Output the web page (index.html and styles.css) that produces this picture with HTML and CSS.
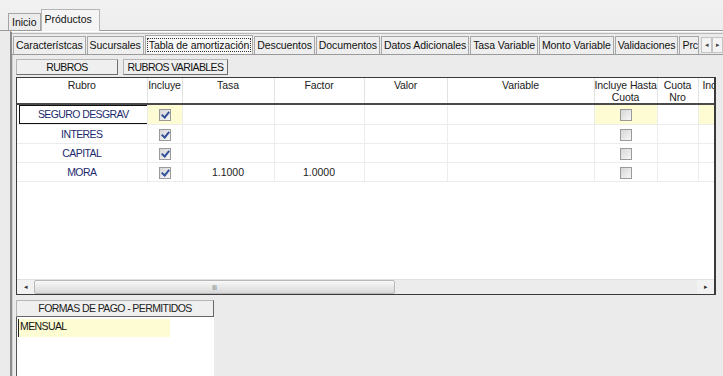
FILE: index.html
```html
<!DOCTYPE html>
<html lang="es">
<head>
  <meta charset="UTF-8" />
  <title>Productos</title>
  <link rel="stylesheet" href="styles.css">
</head>
<body>
  <div class="top-tabs">
    <div class="tab">Inicio</div>
    <div class="tab active">Próductos</div>
  </div>

  <div class="outer">
    <div class="sub-tabs">
      <div class="stab">Característcas</div>
      <div class="stab">Sucursales</div>
      <div class="stab active"><span class="focus">Tabla de amortización</span></div>
      <div class="stab">Descuentos</div>
      <div class="stab">Documentos</div>
      <div class="stab">Datos Adicionales</div>
      <div class="stab">Tasa Variable</div>
      <div class="stab">Monto Variable</div>
      <div class="stab">Validaciones</div>
      <div class="stab cut">Prc</div>
      <div class="arrows">
        <span class="arr">&#9666;</span>
        <span class="arr">&#9656;</span>
      </div>
    </div>

    <div class="inner">
      <div class="btn-row">
        <div class="btn b1">RUBROS</div>
        <div class="btn b2">RUBROS VARIABLES</div>
      </div>

      <div class="grid">
        <table>
          <colgroup>
            <col style="width:130px"><col style="width:35px"><col style="width:92px">
            <col style="width:90px"><col style="width:83px"><col style="width:147px">
            <col style="width:63px"><col style="width:41px"><col style="width:17px">
          </colgroup>
          <thead>
            <tr>
              <th>Rubro</th><th>Incluye</th><th>Tasa</th><th>Factor</th><th>Valor</th>
              <th>Variable</th><th>Incluye Hasta<br>Cuota</th><th>Cuota<br>Nro</th><th class="clip">Inc</th>
            </tr>
          </thead>
          <tbody>
            <tr>
              <td class="name sel"><span>SEGURO DESGRAV</span></td>
              <td class="yel"><span class="cb on"></span></td>
              <td></td><td></td><td></td><td></td>
              <td class="yel"><span class="cb"></span></td>
              <td></td><td class="yel"></td>
            </tr>
            <tr>
              <td class="name">INTERES</td>
              <td><span class="cb on"></span></td>
              <td></td><td></td><td></td><td></td>
              <td><span class="cb"></span></td>
              <td></td><td></td>
            </tr>
            <tr>
              <td class="name">CAPITAL</td>
              <td><span class="cb on"></span></td>
              <td></td><td></td><td></td><td></td>
              <td><span class="cb"></span></td>
              <td></td><td></td>
            </tr>
            <tr>
              <td class="name">MORA</td>
              <td><span class="cb on"></span></td>
              <td>1.1000</td><td>1.0000</td><td></td><td></td>
              <td><span class="cb"></span></td>
              <td></td><td></td>
            </tr>
          </tbody>
        </table>
        <div class="hscroll">
          <span class="sarr">&#9666;</span>
          <div class="thumb">|||</div>
          <div class="track"></div>
          <span class="sarr">&#9656;</span>
        </div>
      </div>

      <div class="formas">
        <div class="formas-left">
          <div class="formas-head">FORMAS DE PAGO - PERMITIDOS</div>
          <div class="list">
            <div class="list-item">MENSUAL</div>
          </div>
        </div>
      </div>
    </div>
  </div>
</body>
</html>
```

FILE: styles.css
```css
body { margin: 0; background: #ebebeb; font-family: "Liberation Sans", Arial, sans-serif; font-size: 10.5px; color: #111; height: 376px; overflow: hidden; }
.btn, td.name, .formas-head, .list-item { font-size: 10.5px; letter-spacing: -0.6px; }

.top-tabs { display: flex; align-items: flex-end; height: 30px; padding-left: 8px; background: linear-gradient(#f1f1f1, #eeeeee); border-bottom: 1px solid #9a9a9a; }
.tab { height: 16px; line-height: 16px; padding: 0 3px; border: 1px solid #a5a5a5; border-bottom: none; background: #ececec; }
.tab.active { height: 21px; line-height: 18px; padding: 0 7px 0 3px; background: #f5f5f5; margin-bottom: -1px; border-color: #b5b5b5; }

.outer { margin-left: 10px; border-left: 2px solid #8c8c8c; border-top: 1px solid #ffffff; height: 345px; }
.sub-tabs { display: flex; align-items: flex-end; height: 20px; padding-left: 1px; margin-top: 1px; border-bottom: 1px solid #9a9a9a; border-top: 1px solid #b8b8b8; overflow: hidden; }
.stab { height: 17px; line-height: 17px; padding: 0 2px; border: 1px solid #a8a8a8; border-bottom: none; background: #eeeeee; margin-right: 1px; white-space: nowrap; flex-shrink: 0; letter-spacing: -0.08px; }
.stab.active { height: 19px; line-height: 18px; background: #f7f7f7; margin-bottom: -1px; padding: 0 1px; }
.focus { border: 1px dotted #333; padding: 0 1px; }
.stab.cut { width: 16px; overflow: hidden; padding-right: 0; }
.arrows { display: flex; margin-left: 1px; margin-bottom: 1px; flex-shrink: 0; }
.arr { width: 9px; height: 14px; line-height: 14px; font-size: 7px; text-align: center; border: 1px solid #c4c4c4; background: #f3f3f3; color: #444; }

.inner { padding-left: 3px; border-left: 1px solid #d0d0d0; height: 322px; }
.btn-row { display: flex; gap: 5px; padding-top: 4px; }
.btn { height: 14px; line-height: 14px; border: 1px solid #b5b5b5; border-right-color: #6e6e6e; border-bottom-color: #6e6e6e; background: #efefef; text-align: center; white-space: nowrap; }
.btn.b1 { width: 100px; }
.btn.b2 { width: 103px; }

.grid { width: 697px; height: 216px; margin-top: 2px; border: 1px solid #3a3a3a; border-width: 1px 2px 1px 1px; background: #fff; position: relative; overflow: hidden; }
table { border-collapse: collapse; table-layout: fixed; width: 698px; }
th { height: 23px; font-weight: normal; vertical-align: top; line-height: 12px; padding: 1px 0 0; text-align: center; border-right: 1px solid #e2e2e2; border-bottom: 2px solid #4a4a4a; color: #222; white-space: nowrap; letter-spacing: -0.1px; }
th.clip { text-align: left; overflow: hidden; padding-left: 4px; }
td { height: 18px; padding: 0; text-align: center; border-right: 1px solid #ececec; border-bottom: 1px solid #ececec; color: #222; }
td.name { color: #1c2a6e; }
td.sel { padding: 0 0 0 2px; }
td.sel span { display: block; height: 17px; line-height: 17px; border: 1px solid #111; border-right: none; }
td.yel { background: #fdfcd2; }
.cb { display: inline-block; width: 10px; height: 10px; border: 1px solid #9a9a9a; background: linear-gradient(135deg, #d6d6d6, #f7f7f7); vertical-align: middle; position: relative; }
.cb.on::after { content: ""; position: absolute; left: 3px; top: 0; width: 3px; height: 6px; border: solid #34509a; border-width: 0 2px 2px 0; transform: rotate(40deg); }

.hscroll { position: absolute; left: 0; right: 0; bottom: 0; height: 14px; display: flex; background: #f0f0f0; border-top: 1px solid #e0e0e0; }
.sarr { width: 17px; font-size: 7px; line-height: 14px; text-align: center; color: #333; background: #f2f2f2; }
.thumb { width: 359px; font-size: 6px; line-height: 13px; text-align: center; color: #555; background: linear-gradient(#f9f9f9, #d8d8d8); border: 1px solid #b8b8b8; border-radius: 2px; }
.track { flex: 1; background: #ececec; }

.formas { display: flex; margin-top: 5px; }
.formas-left { width: 198px; }
.formas-head { height: 15px; line-height: 15px; text-align: center; border: 1px solid #b5b5b5; border-right-color: #666; border-bottom-color: #666; background: #efefef; color: #222; }
.list { height: 62px; background: #fff; border-left: 1px solid #555; padding: 2px 0 0 1px; }
.list-item { width: 150px; height: 18px; line-height: 14px; background: #fdfcd2; border-left: 1px solid #222; padding-left: 1px; color: #111; }
```
